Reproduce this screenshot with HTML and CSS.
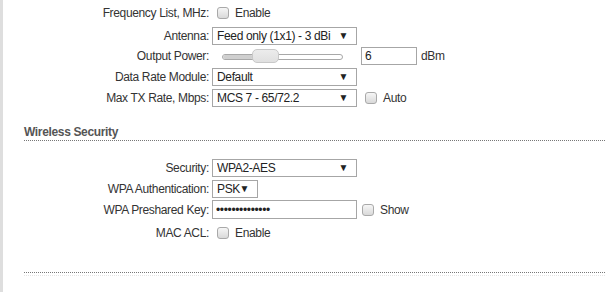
FILE: index.html
```html
<!DOCTYPE html>
<html lang="en">
<head>
  <meta charset="UTF-8" />
  <title>Wireless Settings</title>
  <link rel="stylesheet" href="styles.css">
</head>
<body>
  <div class="page">
    <div class="form">
      <div class="row first">
        <label class="lbl">Frequency List, MHz:</label>
        <label class="check"><input type="checkbox" class="cb"> Enable</label>
      </div>
      <div class="row gap">
        <label class="lbl">Antenna:</label>
        <span class="sel"><select><option>Feed only (1x1) - 3 dBi</option></select></span>
      </div>
      <div class="row power">
        <label class="lbl">Output Power:</label>
        <div class="slider">
          <div class="track"><div class="fill"></div></div>
          <div class="thumb"></div>
        </div>
        <input type="text" class="txt short" value="6">
        <span class="unit">dBm</span>
      </div>
      <div class="row">
        <label class="lbl">Data Rate Module:</label>
        <span class="sel"><select><option>Default</option></select></span>
      </div>
      <div class="row">
        <label class="lbl">Max TX Rate, Mbps:</label>
        <span class="sel"><select><option>MCS 7 - 65/72.2</option></select></span>
        <label class="check side"><input type="checkbox" class="cb"> Auto</label>
      </div>
    </div>

    <div class="section">
      <h2>Wireless Security</h2>
    </div>

    <div class="form sec">
      <div class="row">
        <label class="lbl">Security:</label>
        <span class="sel"><select><option>WPA2-AES</option></select></span>
      </div>
      <div class="row">
        <label class="lbl">WPA Authentication:</label>
        <span class="sel small"><select><option>PSK</option></select></span>
      </div>
      <div class="row key">
        <label class="lbl">WPA Preshared Key:</label>
        <input type="password" class="txt" value="secretpassword">
        <label class="check show"><input type="checkbox" class="cb"> Show</label>
      </div>
      <div class="row acl">
        <label class="lbl">MAC ACL:</label>
        <label class="check"><input type="checkbox" class="cb"> Enable</label>
      </div>
    </div>

    <div class="footer-line"></div>
  </div>
</body>
</html>
```

FILE: styles.css
```css
body {
  margin: 0;
  font-family: "Liberation Sans", Arial, sans-serif;
  font-size: 12px;
  letter-spacing: -0.35px;
  color: #333;
  background: #fff;
}
.page {
  border-left: 3px solid #dedede;
  min-height: 292px;
  box-sizing: border-box;
  padding-top: 4px;
}
.form {
  display: flex;
  flex-direction: column;
  gap: 3px;
}
.row {
  display: flex;
  align-items: center;
  height: 18px;
}
.row.gap {
  margin-top: 2px;
}
.row.power {
  margin-top: -1px;
}
.row.key {
  height: 19px;
  margin-top: -1px;
}
.row.acl {
  margin-top: 2px;
}
.lbl {
  width: 206px;
  text-align: right;
  margin-right: 3px;
  white-space: nowrap;
}
.check {
  display: flex;
  align-items: center;
  gap: 6px;
  margin-left: 5px;
}
.check.side {
  margin-left: 8px;
}
.check.show {
  margin-left: 5px;
}
.cb {
  appearance: none;
  -webkit-appearance: none;
  width: 12px;
  height: 12px;
  margin: 0;
  border: 1px solid #a9a9a9;
  border-radius: 3px;
  background: linear-gradient(#f6f6f6, #d9d9d9);
  box-sizing: border-box;
}
.sel {
  position: relative;
  display: inline-block;
  width: 145px;
  height: 18px;
}
.sel.small {
  width: 46px;
}
.sel select {
  appearance: none;
  -webkit-appearance: none;
  width: 100%;
  height: 18px;
  margin: 0;
  padding: 0 0 0 4px;
  border: 1px solid #a6a6a6;
  border-radius: 0;
  background: #fff;
  font: inherit;
  letter-spacing: -0.35px;
  color: #222;
}
.sel::after {
  content: "\25BC";
  position: absolute;
  right: 9px;
  top: 3px;
  font-size: 10px;
  line-height: 12px;
  color: #222;
  pointer-events: none;
}
.slider {
  position: relative;
  width: 145px;
  height: 18px;
}
.track {
  position: absolute;
  left: 10px;
  right: 14px;
  top: 7px;
  height: 4px;
  border: 1px solid #a8a8a8;
  border-radius: 3px;
  background: #fff;
}
.fill {
  width: 30px;
  height: 100%;
  background: #cfcfcf;
  border-radius: 2px;
}
.thumb {
  position: absolute;
  left: 40px;
  top: 2px;
  width: 27px;
  height: 14px;
  border: 1px solid #c8c8c8;
  border-radius: 5px;
  background: linear-gradient(#ececec, #e0e0e0);
  box-sizing: border-box;
}
.txt {
  width: 145px;
  height: 100%;
  margin: 0;
  padding: 0 3px;
  border: 1px solid #a6a6a6;
  box-sizing: border-box;
  font: inherit;
  letter-spacing: -0.35px;
  color: #222;
}
.txt.short {
  width: 56px;
  margin-left: 4px;
}
.unit {
  margin-left: 4px;
}
.section {
  padding: 0 0 0 21px;
  margin-top: 18px;
}
.section h2 {
  margin: 0;
  font-size: 12px;
  font-weight: bold;
  color: #555;
  line-height: 14px;
  padding-bottom: 1px;
  border-bottom: 1px dotted #777;
}
.form.sec {
  margin-top: 18px;
}
.footer-line {
  margin: 30px 0 0 21px;
  border-top: 1px dotted #777;
  border-bottom: 1px dotted #e4e4e4;
  height: 2px;
}
```
